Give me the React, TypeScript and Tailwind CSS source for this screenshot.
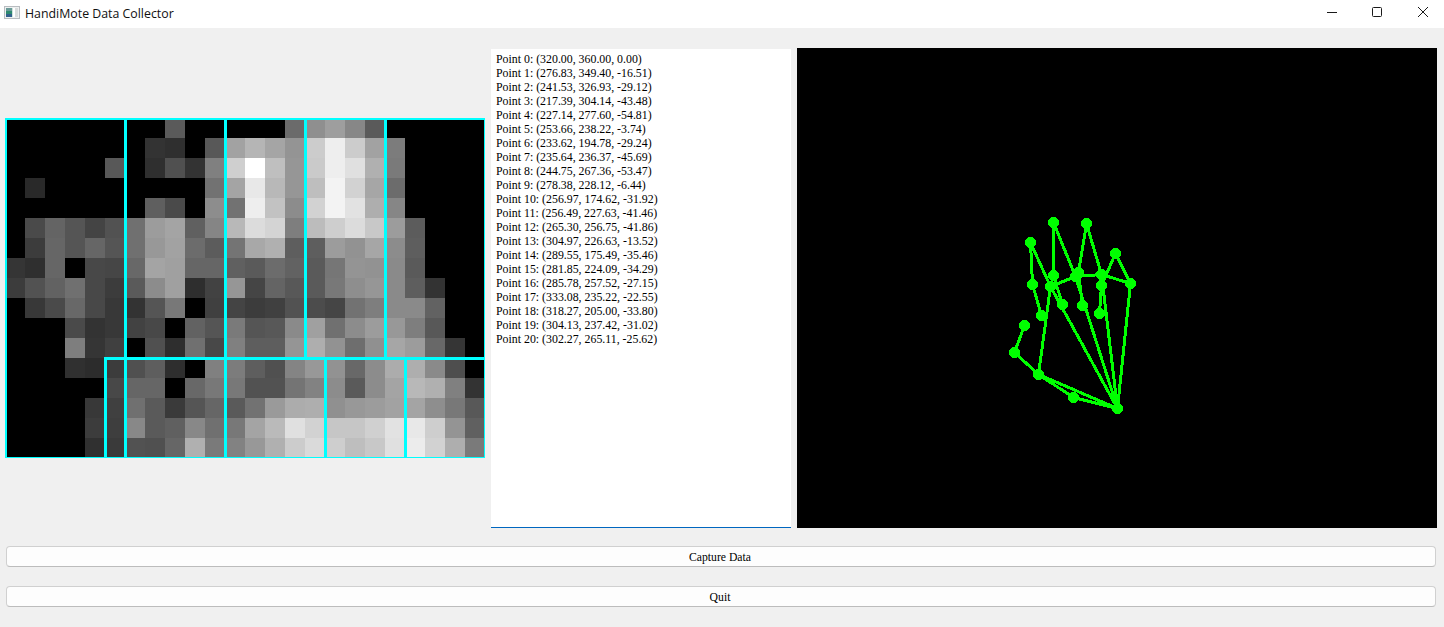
const SENSOR: number[][] = [
  [0,0,0,0,0,0,0,0,0x5a,0,0,0,0,0,0x6b,0x8f,0x9e,0x87,0x5a,0,0,0,0,0],
  [0,0,0,0,0,0,0,0x33,0x2f,0,0x58,0xa2,0xb5,0xa5,0x94,0xcc,0xee,0xcc,0xa2,0x7c,0,0,0,0],
  [0,0,0,0,0,0x58,0,0x2f,0x50,0x33,0x80,0xcf,0xff,0xbf,0x96,0xca,0xee,0xe0,0xb0,0x7a,0,0,0,0],
  [0,0x29,0,0,0,0,0,0,0,0,0x72,0xa4,0xe8,0xb8,0x96,0xbe,0xf3,0xd2,0xa6,0x6c,0,0,0,0],
  [0,0,0,0,0,0,0,0x5f,0x4a,0,0x8d,0x72,0xee,0xc2,0x8c,0xd2,0xf3,0xe2,0xae,0x86,0,0,0,0],
  [0,0x4a,0x64,0x55,0x44,0x52,0x70,0x9c,0xa4,0x60,0x85,0xb8,0xdc,0xd4,0x7e,0xbc,0xce,0xdc,0xc8,0x9c,0x5c,0,0,0],
  [0,0x3c,0x66,0x55,0x66,0x55,0x70,0x98,0xa2,0x6c,0x5c,0x74,0xa8,0xb0,0x5e,0x5e,0x9c,0x92,0xa6,0x8c,0x5e,0,0,0],
  [0x35,0x2f,0x66,0,0x48,0x46,0x68,0xa4,0xa0,0x66,0x66,0x60,0x5a,0x6c,0x62,0x5a,0x76,0x94,0x92,0x8a,0x5a,0,0,0],
  [0x3c,0x52,0x62,0x70,0x48,0x3c,0x5a,0x8c,0xa0,0x2e,0x42,0x96,0x45,0x64,0x58,0x5a,0x78,0x8e,0x96,0x8a,0x5e,0x33,0,0],
  [0,0x38,0x4a,0x68,0x48,0x38,0x33,0x55,0x78,0,0x40,0x44,0x3c,0x40,0x52,0x4c,0x45,0x72,0x7e,0x8a,0x8a,0x62,0,0],
  [0,0,0,0x4a,0x33,0x38,0x42,0x48,0,0x62,0x55,0x7a,0x55,0x58,0x8a,0xa0,0x70,0x8c,0x9c,0x98,0x7e,0x58,0,0],
  [0,0,0,0x7e,0x35,0x40,0,0x50,0x2e,0x70,0x48,0x80,0x5e,0x5e,0x95,0xae,0x92,0x6e,0x90,0xa6,0x9c,0x68,0x35,0],
  [0,0,0,0x30,0x2c,0x3c,0x50,0x5e,0x2e,0,0x80,0x7c,0x5e,0x50,0x84,0x98,0x92,0x68,0x8c,0xac,0xae,0x8a,0x4e,0],
  [0,0,0,0,0,0x48,0x66,0x66,0,0x68,0x78,0x78,0x52,0x52,0x74,0x82,0x8c,0x5a,0x8c,0xa4,0xb8,0xb0,0x80,0x33],
  [0,0,0,0,0x38,0x40,0x70,0x5a,0x3a,0x55,0x66,0x5a,0x72,0x9a,0xac,0xae,0x90,0x98,0x9c,0xa2,0xa4,0x8e,0x78,0x58],
  [0,0,0,0,0x3c,0x3e,0x88,0x5a,0x60,0x88,0x70,0x78,0xa4,0xba,0xe0,0xd2,0xc6,0xc6,0xd0,0xe2,0xe8,0xce,0x94,0x60],
  [0,0,0,0,0x30,0x3a,0x52,0x50,0x66,0xb0,0x7a,0x82,0x98,0xb0,0xcc,0xda,0xce,0xbe,0xc8,0xe0,0xec,0xd2,0xae,0x7a],
];

// detection boxes on the sensor picture: x, y, w, h
const BOXES = [
  [0, 0, 120, 340],
  [120, 0, 100, 240],
  [220, 0, 80, 240],
  [300, 0, 80, 240],
  [380, 0, 100, 240],
  [100, 240, 20, 100],
  [120, 240, 100, 100],
  [220, 240, 100, 100],
  [320, 240, 80, 100],
  [400, 240, 80, 100],
];

const POINTS: [number, number, number][] = [
  [320.0, 360.0, 0.0],
  [276.83, 349.4, -16.51],
  [241.53, 326.93, -29.12],
  [217.39, 304.14, -43.48],
  [227.14, 277.6, -54.81],
  [253.66, 238.22, -3.74],
  [233.62, 194.78, -29.24],
  [235.64, 236.37, -45.69],
  [244.75, 267.36, -53.47],
  [278.38, 228.12, -6.44],
  [256.97, 174.62, -31.92],
  [256.49, 227.63, -41.46],
  [265.3, 256.75, -41.86],
  [304.97, 226.63, -13.52],
  [289.55, 175.49, -35.46],
  [281.85, 224.09, -34.29],
  [285.78, 257.52, -27.15],
  [333.08, 235.22, -22.55],
  [318.27, 205.0, -33.8],
  [304.13, 237.42, -31.02],
  [302.27, 265.11, -25.62],
];

const BONES = [
  [0, 1], [1, 2], [2, 3], [3, 4], [0, 2],
  [2, 5], [5, 6], [6, 7], [7, 8], [0, 5],
  [5, 9], [9, 10], [10, 11], [11, 12], [0, 9],
  [9, 13], [13, 14], [14, 15], [15, 16], [0, 13],
  [13, 17], [17, 18], [18, 19], [19, 20], [0, 17],
];

function TitleBar() {
  return (
    <div className="flex h-7 items-center bg-white pl-1">
      <svg width="16" height="13" viewBox="0 0 16 13" className="mt-[6px] shrink-0 self-start">
        <rect x="0.5" y="0.5" width="15" height="12" fill="#eef0f0" stroke="#b8bcc0" />
        <rect x="2" y="2" width="6" height="3" fill="#6a9a98" />
        <rect x="2" y="5" width="6" height="3" fill="#2e8a70" />
        <rect x="2" y="8" width="6" height="3" fill="#33608c" />
        <rect x="8" y="2" width="1" height="9" fill="#cfe4dc" />
        <rect x="9" y="2" width="2" height="9" fill="#ffffff" />
        <rect x="11" y="2" width="3" height="9" fill="#d8dcdc" />
      </svg>
      <span className="ml-[5px] font-['Open_Sans',sans-serif] text-[12.35px] text-[#101010]">HandiMote Data Collector</span>
      <div className="ml-auto flex gap-9 self-start pr-4 pt-[7px]">
        <button className="-mr-px block h-[10px] w-[10px]">
          <svg width="10" height="10" viewBox="0 0 10 10" className="block">
            <path d="M0 5.5H10" stroke="#1a1a1a" />
          </svg>
        </button>
        <button className="block h-[10px] w-[10px]">
          <svg width="10" height="10" viewBox="0 0 10 10" className="block">
            <rect x="0.5" y="0.5" width="9" height="9" rx="1" fill="none" stroke="#1a1a1a" />
          </svg>
        </button>
        <button className="block h-[10px] w-[10px]">
          <svg width="10" height="10" viewBox="0 0 10 10" className="block">
            <path d="M0 0L10 10M10 0L0 10" stroke="#1a1a1a" />
          </svg>
        </button>
      </div>
    </div>
  );
}

function SensorView() {
  return (
    <svg width="480" height="340" viewBox="0 0 480 340" className="block" shapeRendering="crispEdges">
      {SENSOR.flatMap((row, r) =>
        row.map((v, c) => (
          <rect key={`${r}-${c}`} x={c * 20} y={r * 20} width="20" height="20" fill={`rgb(${v},${v},${v})`} />
        ))
      )}
      {BOXES.map(([x, y, w, h], i) => (
        <rect key={i} x={x} y={y} width={w} height={h} fill="none" stroke="#00ffff" strokeWidth="3" />
      ))}
    </svg>
  );
}

function HandView() {
  // the hand is plotted on whole pixels, the list keeps the decimals
  const px = (v: number) => Math.floor(v) + 0.5;
  return (
    <svg width="640" height="480" viewBox="0 0 640 480" className="block bg-black" shapeRendering="crispEdges">
      {BONES.map(([a, b]) => (
        <line
          key={`${a}-${b}`}
          x1={px(POINTS[a][0])}
          y1={px(POINTS[a][1])}
          x2={px(POINTS[b][0])}
          y2={px(POINTS[b][1])}
          stroke="#00ff00"
          strokeWidth="3"
        />
      ))}
      {POINTS.map(([x, y], i) => (
        <circle key={i} cx={px(x)} cy={px(y)} r="5.5" fill="#00ff00" />
      ))}
    </svg>
  );
}

function QtButton({ label }: { label: string }) {
  return (
    <button className="h-[21px] w-full rounded-[4px] border border-[#d0d0d0] border-b-[#bcbcbc] bg-[#fdfdfd] pr-[2px] pt-[2px] font-['Liberation_Serif',serif] text-[11.7px] leading-none text-black">
      {label}
    </button>
  );
}

export default function App() {
  return (
    <div className="flex h-[627px] w-[1444px] flex-col overflow-hidden bg-[#f0f0f0]">
      <TitleBar />
      <div className="mt-5 flex h-[480px] gap-[6px] pl-[5px]">
        <div className="flex w-[480px] items-center">
          <SensorView />
        </div>
        <div className="mt-px h-[479px] w-[300px] border-b border-[#0067c0] bg-white px-[5px] pt-[3px] font-['Liberation_Serif',serif] text-[11.85px] leading-[14px] text-black">
          {POINTS.map(([x, y, z], i) => (
            <div key={i} className="whitespace-pre">
              Point {i}: ({x.toFixed(2)}, {y.toFixed(2)}, {z.toFixed(2)})
            </div>
          ))}
        </div>
        <HandView />
      </div>
      <div className="mt-[18px] flex flex-col gap-[19px] pl-[6px] pr-2">
        <QtButton label="Capture Data" />
        <QtButton label="Quit" />
      </div>
    </div>
  );
}
